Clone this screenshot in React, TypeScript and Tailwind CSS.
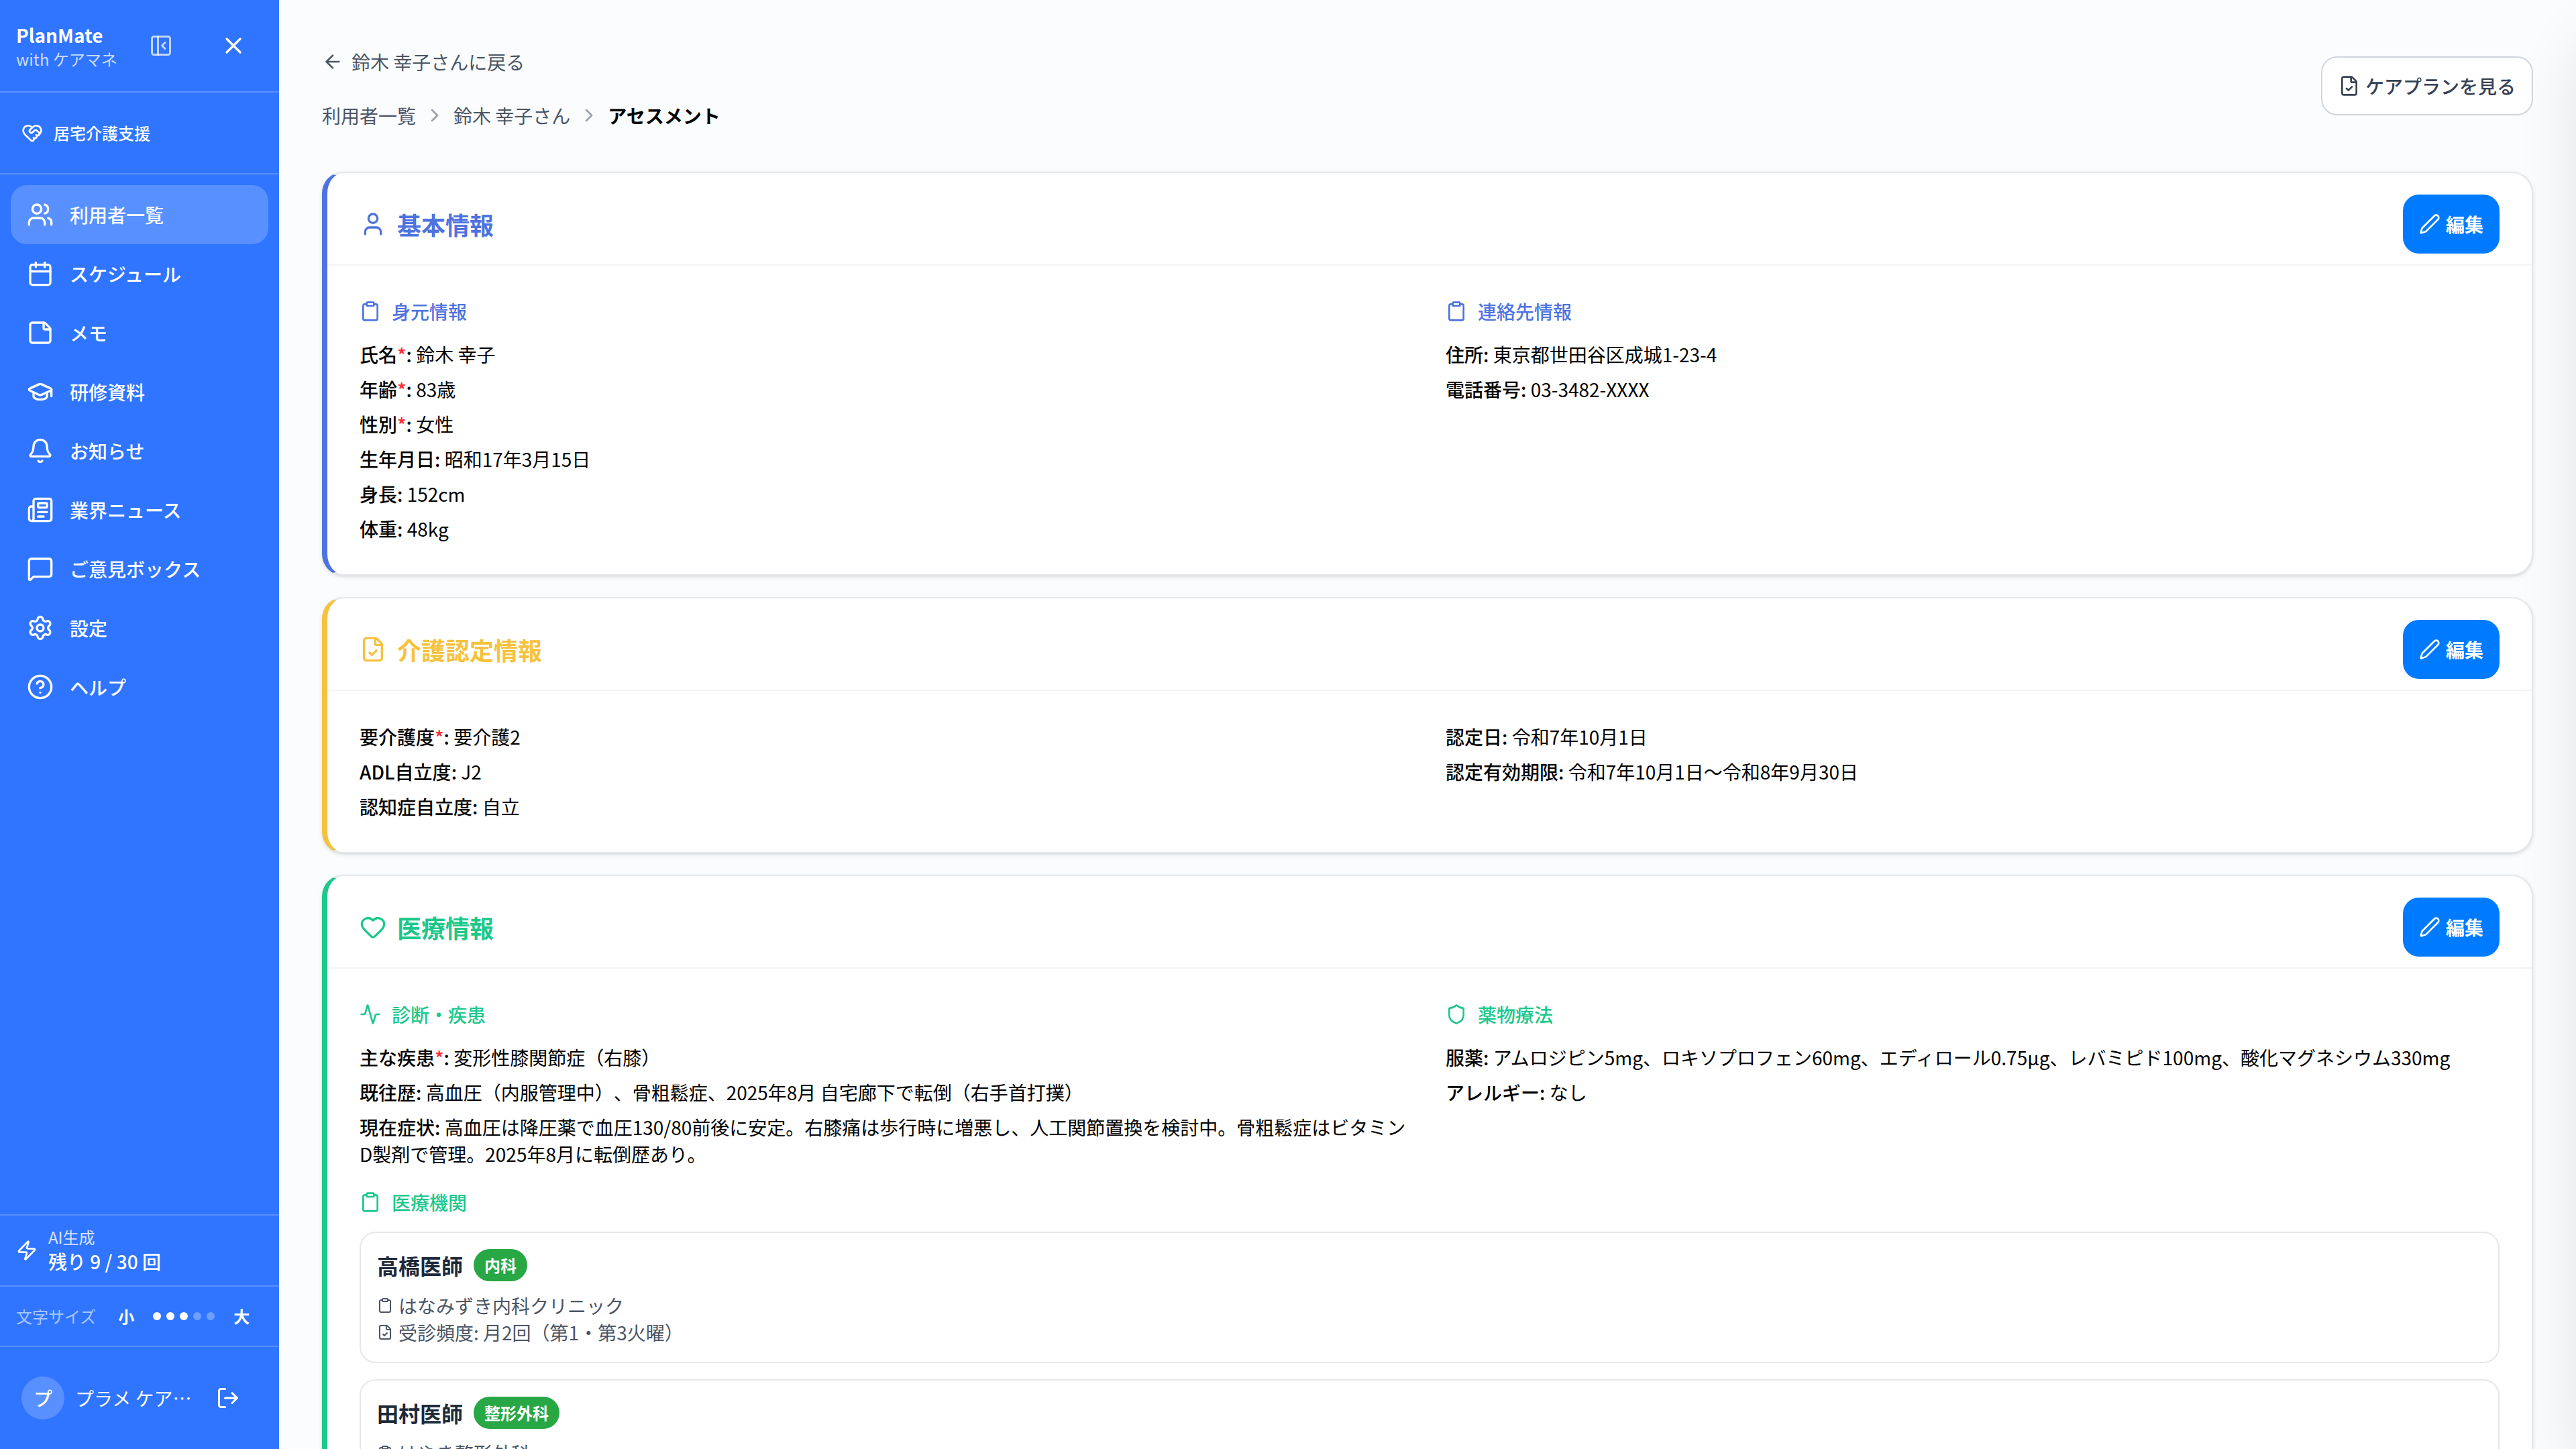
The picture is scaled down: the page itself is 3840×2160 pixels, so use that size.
import type { ReactNode } from "react";
import {
  Activity,
  ArrowLeft,
  Bell,
  Calendar,
  ChevronRight,
  CircleQuestionMark,
  Clipboard,
  FileCheck,
  GraduationCap,
  Heart,
  HeartHandshake,
  LogOut,
  MessageSquare,
  Newspaper,
  PanelLeftClose,
  Pen,
  Settings,
  Shield,
  StickyNote,
  User,
  Users,
  X,
  Zap,
  type LucideIcon,
} from "lucide-react";

const navItems: { label: string; icon: LucideIcon; active?: boolean }[] = [
  { label: "利用者一覧", icon: Users, active: true },
  { label: "スケジュール", icon: Calendar },
  { label: "メモ", icon: StickyNote },
  { label: "研修資料", icon: GraduationCap },
  { label: "お知らせ", icon: Bell },
  { label: "業界ニュース", icon: Newspaper },
  { label: "ご意見ボックス", icon: MessageSquare },
  { label: "設定", icon: Settings },
  { label: "ヘルプ", icon: CircleQuestionMark },
];

function Sidebar() {
  return (
    <aside className="flex h-full w-[416px] shrink-0 flex-col bg-[#3075ff] text-white">
      <div className="flex h-[138px] shrink-0 items-center border-b-2 border-white/20 pl-6">
        <div className="w-[198px]">
          <div className="text-[28px] leading-10 font-bold">PlanMate</div>
          <div className="text-2xl leading-8 text-white/75">with ケアマネ</div>
        </div>
        <PanelLeftClose className="size-9 text-white/70" />
        <X className="ml-[70px] size-10" />
      </div>

      <div className="flex h-[122px] shrink-0 items-center gap-4 border-b-2 border-white/20 px-8">
        <HeartHandshake className="size-8" />
        <span className="text-2xl leading-8 font-medium">居宅介護支援</span>
      </div>

      <nav className="flex flex-1 flex-col p-4">
        {navItems.map(({ label, icon: Icon, active }) => (
          <a
            key={label}
            className={`flex h-[88px] items-center gap-6 rounded-3xl px-6 ${active ? "bg-white/20" : ""}`}
          >
            <Icon className="size-10" />
            <span className="text-[28px] leading-10 font-medium">{label}</span>
          </a>
        ))}
      </nav>

      <div className="flex h-[106px] shrink-0 items-center gap-4 border-t-2 border-white/20 px-6">
        <Zap className="size-8" />
        <div>
          <div className="text-2xl leading-8 text-white/80">AI生成</div>
          <div className="text-[28px] leading-10 font-medium">残り 9 / 30 回</div>
        </div>
      </div>

      <div className="flex h-[90px] shrink-0 items-center border-t-2 border-white/20 px-6 text-2xl leading-8">
        <span className="mr-[21px] text-white/60">文字サイズ</span>
        <button className="w-12 text-center font-bold">小</button>
        <div className="mx-4 flex gap-2">
          {[true, true, true, false, false].map((on, i) => (
            <span key={i} className={`size-3 rounded-full ${on ? "bg-white" : "bg-white/30"}`} />
          ))}
        </div>
        <button className="w-12 text-center font-bold">大</button>
      </div>

      <div className="flex h-[154px] shrink-0 items-center border-t-2 border-white/20 pl-8">
        <div className="flex size-16 items-center justify-center rounded-full bg-white/20 text-[28px] font-medium">
          プ
        </div>
        <span className="ml-4 w-[210px] text-[28px] leading-10">プラメ ケア…</span>
        <LogOut className="size-9" />
      </div>
    </aside>
  );
}

function Section({
  icon: Icon,
  title,
  border,
  text,
  children,
}: {
  icon: LucideIcon;
  title: string;
  border: string;
  text: string;
  children: ReactNode;
}) {
  return (
    <section
      className={`rounded-[32px] border-2 border-l-8 border-[#e5e7eb] bg-white shadow-[0_2px_6px_rgba(0,0,0,0.1),0_2px_4px_-2px_rgba(0,0,0,0.1)] ${border}`}
    >
      <div className="flex items-center justify-between border-b-2 border-gray-100 px-12 pt-8 pb-4">
        <h2 className={`flex items-center gap-4 text-4xl font-bold ${text}`}>
          <Icon className="size-10" />
          {title}
        </h2>
        <button className="flex h-[88px] items-center gap-2 rounded-3xl bg-[#007bff] px-6 text-[28px] leading-10 font-bold text-white">
          <Pen className="size-8" />
          編集
        </button>
      </div>
      <div className="p-12">{children}</div>
    </section>
  );
}

function SubHeading({ icon: Icon, title, color }: { icon: LucideIcon; title: string; color: string }) {
  return (
    <h3 className={`mb-6 flex items-center gap-4 leading-10 font-medium ${color}`}>
      <Icon className="size-8" />
      {title}
    </h3>
  );
}

type Field = [label: string, value: string, required?: boolean];

function Fields({ items }: { items: Field[] }) {
  return (
    <div className="flex flex-col gap-3">
      {items.map(([label, value, required]) => (
        <p key={label}>
          <span className="font-medium">
            {label}
            {required && <span className="text-red-500">*</span>}:
          </span>{" "}
          {value}
        </p>
      ))}
    </div>
  );
}

function Doctor({
  name,
  dept,
  clinic,
  frequency,
}: {
  name: string;
  dept: string;
  clinic: string;
  frequency: string;
}) {
  return (
    <div className="rounded-3xl border-2 border-gray-200 p-6">
      <div className="mb-4 flex h-12 items-center gap-4">
        <span className="text-[32px] font-semibold text-gray-800">{name}</span>
        <span className="flex h-12 items-center rounded-full bg-[#28a745] px-4 text-2xl font-semibold text-white">
          {dept}
        </span>
      </div>
      <div className="text-gray-600">
        <div className="flex items-center gap-2">
          <Clipboard className="size-6" />
          {clinic}
        </div>
        <div className="flex items-center gap-2">
          <FileCheck className="size-6" />
          受診頻度: {frequency}
        </div>
      </div>
    </div>
  );
}

export default function App() {
  return (
    <div
      lang="ja"
      className="relative flex h-[2160px] w-[3840px] overflow-hidden bg-[#fafcfe] font-['Noto_Sans_CJK_JP',sans-serif] text-[28px] leading-10 text-black [text-spacing-trim:space-all]"
    >
      <Sidebar />
      <main className="flex-1 px-16">
        <header className="flex h-64 items-start justify-between">
          <div className="pt-[72px] text-gray-600">
            <a className="flex items-center gap-3">
              <ArrowLeft className="size-8" />
              鈴木 幸子さんに戻る
            </a>
            <nav className="mt-10 flex items-center gap-3">
              <span>利用者一覧</span>
              <ChevronRight className="size-8 text-gray-400" />
              <span>鈴木 幸子さん</span>
              <ChevronRight className="size-8 text-gray-400" />
              <span className="font-semibold text-black">アセスメント</span>
            </nav>
          </div>
          <button className="mt-[84px] flex h-[88px] items-center gap-2 rounded-3xl border-2 border-gray-300 bg-white px-6 font-medium text-gray-700">
            <FileCheck className="size-8" />
            ケアプランを見る
          </button>
        </header>

        <div className="flex flex-col gap-8">
          <Section icon={User} title="基本情報" border="border-l-[#4e73df]" text="text-[#4e73df]">
            <div className="grid grid-cols-2 gap-12">
              <div>
                <SubHeading icon={Clipboard} title="身元情報" color="text-[#4e73df]" />
                <Fields
                  items={[
                    ["氏名", "鈴木 幸子", true],
                    ["年齢", "83歳", true],
                    ["性別", "女性", true],
                    ["生年月日", "昭和17年3月15日"],
                    ["身長", "152cm"],
                    ["体重", "48kg"],
                  ]}
                />
              </div>
              <div>
                <SubHeading icon={Clipboard} title="連絡先情報" color="text-[#4e73df]" />
                <Fields
                  items={[
                    ["住所", "東京都世田谷区成城1-23-4"],
                    ["電話番号", "03-3482-XXXX"],
                  ]}
                />
              </div>
            </div>
          </Section>

          <Section icon={FileCheck} title="介護認定情報" border="border-l-[#f6c23e]" text="text-[#f6c23e]">
            <div className="grid grid-cols-2 gap-12">
              <Fields
                items={[
                  ["要介護度", "要介護2", true],
                  ["ADL自立度", "J2"],
                  ["認知症自立度", "自立"],
                ]}
              />
              <Fields
                items={[
                  ["認定日", "令和7年10月1日"],
                  ["認定有効期限", "令和7年10月1日〜令和8年9月30日"],
                ]}
              />
            </div>
          </Section>

          <Section icon={Heart} title="医療情報" border="border-l-[#1cc88a]" text="text-[#1cc88a]">
            <div className="mb-8 grid grid-cols-2 gap-12">
              <div>
                <SubHeading icon={Activity} title="診断・疾患" color="text-[#1cc88a]" />
                <Fields
                  items={[
                    ["主な疾患", "変形性膝関節症（右膝）", true],
                    ["既往歴", "高血圧（内服管理中）、骨粗鬆症、2025年8月 自宅廊下で転倒（右手首打撲）"],
                    [
                      "現在症状",
                      "高血圧は降圧薬で血圧130/80前後に安定。右膝痛は歩行時に増悪し、人工関節置換を検討中。骨粗鬆症はビタミンD製剤で管理。2025年8月に転倒歴あり。",
                    ],
                  ]}
                />
              </div>
              <div>
                <SubHeading icon={Shield} title="薬物療法" color="text-[#1cc88a]" />
                <Fields
                  items={[
                    [
                      "服薬",
                      "アムロジピン5mg、ロキソプロフェン60mg、エディロール0.75μg、レバミピド100mg、酸化マグネシウム330mg",
                    ],
                    ["アレルギー", "なし"],
                  ]}
                />
              </div>
            </div>
            <SubHeading icon={Clipboard} title="医療機関" color="text-[#1cc88a]" />
            <div className="flex flex-col gap-6">
              <Doctor
                name="高橋医師"
                dept="内科"
                clinic="はなみずき内科クリニック"
                frequency="月2回（第1・第3火曜）"
              />
              <Doctor name="田村医師" dept="整形外科" clinic="はやき整形外科" frequency="月1回" />
            </div>
          </Section>
        </div>
      </main>

      {/* Closed drawer: parked past the right edge, only its shadow is visible */}
      <div className="absolute top-0 left-full h-full w-[800px] bg-white shadow-[0_50px_100px_-24px_rgba(0,0,0,0.16)]" />
    </div>
  );
}
